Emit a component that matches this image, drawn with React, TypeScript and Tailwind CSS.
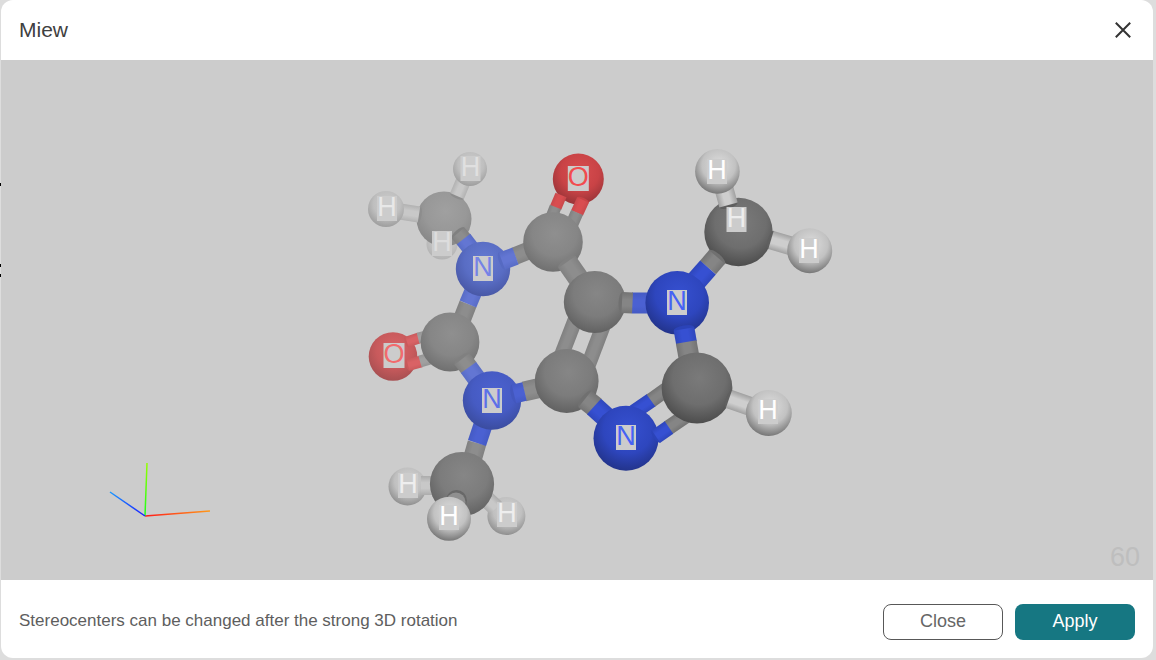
type Point = [number, number];
type Tone = { light: string; base: string; dark: string; seam: string; rod: string; rodEdge: string };

const tones: Record<string, Tone> = {
  carbonNear: { light: "#7a7a7a", base: "#6e6e6e", dark: "#484848", seam: "#656565", rod: "#7d7d7d", rodEdge: "#6a6a6a" },
  carbon: { light: "#868686", base: "#7c7c7c", dark: "#5e5e5e", seam: "#707070", rod: "#858585", rodEdge: "#737373" },
  carbonMid: { light: "#8f8f8f", base: "#868686", dark: "#6d6d6d", seam: "#808080", rod: "#8d8d8d", rodEdge: "#808080" },
  carbonFar: { light: "#a0a0a0", base: "#989898", dark: "#858585", seam: "#929292", rod: "#a0a0a0", rodEdge: "#959595" },
  nitrogenNear: { light: "#3650d0", base: "#2e46be", dark: "#213184", seam: "#2b43b8", rod: "#3650d2", rodEdge: "#2e46bc" },
  nitrogen: { light: "#4c62d0", base: "#465bc3", dark: "#394a9a", seam: "#4357be", rod: "#4b61d2", rodEdge: "#445ac4" },
  nitrogenFar: { light: "#667bd2", base: "#596dc4", dark: "#4655a2", seam: "#566ac2", rod: "#6376d3", rodEdge: "#586cc6" },
  oxygen: { light: "#d84d4f", base: "#c94346", dark: "#923236", seam: "#c84346", rod: "#d94d50", rodEdge: "#c8484b" },
  oxygenFar: { light: "#d96467", base: "#c85a5c", dark: "#a34e50", seam: "#c9595b", rod: "#d96265", rodEdge: "#c95a5c" },
  hydrogenNear: { light: "#dddddd", base: "#c2c2c2", dark: "#6c6c6c", seam: "#5f5f5f", rod: "#cecece", rodEdge: "#a0a0a0" },
  hydrogen: { light: "#d2d2d2", base: "#c0c0c0", dark: "#888888", seam: "#808080", rod: "#c8c8c8", rodEdge: "#acacac" },
  hydrogenFar: { light: "#cdcdcd", base: "#bfbfbf", dark: "#999999", seam: "#8d8d8d", rod: "#c8c8c8", rodEdge: "#b2b2b2" },
  hydrogenFaint: { light: "#c9c9c9", base: "#c3c3c3", dark: "#b0b0b0", seam: "#a8a8a8", rod: "#c8c8c8", rodEdge: "#bbbbbb" },
};

const toneNames = Object.keys(tones);

function Atom({ at, r, tone }: { at: Point; r: number; tone: string }) {
  return <circle cx={at[0]} cy={at[1]} r={r} fill={`url(#${tone})`} />;
}

function Bond({ from, to, w, tone, round }: { from: Point; to: Point; w: number; tone: string; round?: boolean }) {
  const length = Math.hypot(to[0] - from[0], to[1] - from[1]);
  const angle = (Math.atan2(to[1] - from[1], to[0] - from[0]) * 180) / Math.PI;
  return (
    <g transform={`translate(${from[0]} ${from[1]}) rotate(${angle})`}>
      {round && <ellipse cx={0} cy={0} rx={w / 6} ry={w / 2} fill={tones[tone].seam} />}
      <rect x={0} y={-w / 2} width={length} height={w} fill={`url(#${tone}-rod)`} />
    </g>
  );
}

function Label({ x, y, color, plate = "#cccccc", children }: { x: number; y: number; color: string; plate?: string; children: string }) {
  const width = children === "O" ? 21 : 20;
  return (
    <g>
      <rect x={x - width / 2} y={y - 20} width={width} height={25} fill={plate} />
      <text x={x} y={y} textAnchor="middle" fontSize={27} fill={color}>
        {children}
      </text>
    </g>
  );
}

function Molecule() {
  return (
    <svg
      viewBox="1 60 1152 520"
      className="block h-[520px] w-full"
      role="img"
      aria-label="Molecule"
      fontFamily='"Liberation Sans", Arial, sans-serif'
    >
      <defs>
        {toneNames.map((name) => (
          <radialGradient key={name} id={name} cx="0.53" cy="0.36" r="0.68">
            <stop offset="0" stopColor={tones[name].light} />
            <stop offset="0.55" stopColor={tones[name].base} />
            <stop offset="1" stopColor={tones[name].dark} />
          </radialGradient>
        ))}
        {toneNames.map((name) => (
          <linearGradient key={name} id={`${name}-rod`} x1="0" y1="0" x2="0" y2="1">
            <stop offset="0" stopColor={tones[name].rodEdge} />
            <stop offset="0.35" stopColor={tones[name].rod} />
            <stop offset="0.65" stopColor={tones[name].rod} />
            <stop offset="1" stopColor={tones[name].rodEdge} />
          </linearGradient>
        ))}
        <linearGradient id="axis-x" gradientUnits="userSpaceOnUse" x1="145" y1="516" x2="210" y2="511">
          <stop offset="0" stopColor="#ff1a1a" />
          <stop offset="1" stopColor="#ff9a1a" />
        </linearGradient>
        <linearGradient id="axis-y" gradientUnits="userSpaceOnUse" x1="145" y1="516" x2="147" y2="463">
          <stop offset="0" stopColor="#1aff1a" />
          <stop offset="1" stopColor="#96ff00" />
        </linearGradient>
        <linearGradient id="axis-z" gradientUnits="userSpaceOnUse" x1="145" y1="516" x2="110" y2="492">
          <stop offset="0" stopColor="#1a1aff" />
          <stop offset="1" stopColor="#1a9aff" />
        </linearGradient>
      </defs>

      {/* Upper left methyl */}
      <Atom at={[442, 244]} r={15.5} tone="hydrogenFaint" />
      <Atom at={[444, 219]} r={27.5} tone="carbonFar" />
      <Bond from={[419, 214.5]} to={[400, 211.5]} w={16} tone="hydrogenFar" round />
      <Atom at={[386, 209]} r={18} tone="hydrogenFar" />
      <Bond from={[457, 196]} to={[465, 177]} w={15} tone="hydrogenFar" round />
      <Atom at={[470, 169]} r={17} tone="hydrogenFar" />
      <Bond from={[458, 233]} to={[465, 241]} w={17} tone="carbonMid" round />
      <Bond from={[463.5, 239]} to={[475, 254]} w={17} tone="nitrogenFar" />

      {/* Left carbonyl */}
      <Atom at={[393, 356.5]} r={24.3} tone="oxygenFar" />
      <Bond from={[407, 342]} to={[419, 338]} w={11} tone="oxygenFar" round />
      <Bond from={[418, 338]} to={[430, 335]} w={11} tone="carbonFar" />
      <Bond from={[408, 365]} to={[421, 361.5]} w={12} tone="oxygenFar" round />
      <Bond from={[420, 361.5]} to={[432, 358]} w={12} tone="carbonFar" />
      <Bond from={[461, 322]} to={[468, 304]} w={18} tone="carbonMid" />
      <Bond from={[468, 304]} to={[476, 285]} w={18} tone="nitrogenFar" />
      <Bond from={[515, 256]} to={[530, 250]} w={18} tone="carbonMid" />
      <Atom at={[483, 269]} r={27.2} tone="nitrogenFar" />
      <Bond from={[502, 261]} to={[515.5, 256]} w={18} tone="nitrogenFar" round />
      <Atom at={[450, 342]} r={29.4} tone="carbonMid" />
      <Bond from={[462, 359]} to={[469, 368]} w={19} tone="carbonMid" round />
      <Bond from={[468.5, 367.5]} to={[482, 386]} w={19} tone="nitrogenFar" />

      {/* Upper carbonyl */}
      <Atom at={[578.3, 179]} r={25.5} tone="oxygen" />
      <Bond from={[561, 195]} to={[555.5, 208]} w={12} tone="oxygen" />
      <Bond from={[555.5, 207]} to={[550, 221]} w={12} tone="carbonMid" />
      <Bond from={[583, 200]} to={[577, 213]} w={13} tone="oxygen" round />
      <Bond from={[577, 212.5]} to={[569, 231]} w={13} tone="carbonMid" />
      <Atom at={[553, 242]} r={29.8} tone="carbonMid" />
      <Bond from={[567, 262]} to={[590, 295]} w={21} tone="carbonMid" round />

      {/* Five-membered ring */}
      <Bond from={[577, 315]} to={[560, 359]} w={15} tone="carbonMid" />
      <Bond from={[605, 321]} to={[586, 371]} w={15} tone="carbonMid" />
      <Bond from={[632, 303]} to={[655, 303]} w={21} tone="nitrogen" />
      <Bond from={[524, 391.5]} to={[548, 386]} w={20} tone="carbonMid" />
      <Atom at={[594.8, 302]} r={31} tone="carbon" />
      <Bond from={[622, 302.5]} to={[632.5, 303]} w={21} tone="carbon" round />
      <Bond from={[471, 464]} to={[477, 443]} w={19} tone="carbonMid" />
      <Bond from={[477, 443]} to={[484, 422]} w={19} tone="nitrogen" />
      <Atom at={[492, 400.5]} r={29.2} tone="nitrogen" />
      <Bond from={[514, 394]} to={[524.5, 391.5]} w={19} tone="nitrogen" round />
      <Atom at={[566.7, 381]} r={31.9} tone="carbon" />
      <Bond from={[585, 399]} to={[595, 407]} w={21} tone="carbon" round />
      <Bond from={[594, 406.5]} to={[610, 421]} w={21} tone="nitrogenNear" />
      <Bond from={[634, 412]} to={[651.5, 400]} w={15} tone="nitrogenNear" />
      <Bond from={[651, 400.5]} to={[674, 384]} w={15} tone="carbon" />
      <Bond from={[668, 428]} to={[690, 413]} w={15} tone="carbon" />
      <Atom at={[626, 438.3]} r={32.5} tone="nitrogenNear" />
      <Bond from={[656, 436.5]} to={[669, 427.5]} w={15} tone="nitrogenNear" round />

      {/* Upper right methyl */}
      <Atom at={[738.5, 232]} r={34.2} tone="carbonNear" />
      <Bond from={[717, 257]} to={[708, 267.5]} w={21} tone="carbon" round />
      <Bond from={[708, 267.5]} to={[690, 288]} w={21} tone="nitrogenNear" />
      <Bond from={[728.5, 205]} to={[723, 185]} w={19} tone="hydrogenNear" round />
      <Atom at={[717.4, 171.4]} r={22.3} tone="hydrogenNear" />
      <Bond from={[771, 240]} to={[795, 247]} w={19} tone="hydrogenNear" round />
      <Atom at={[809.7, 250.7]} r={22.5} tone="hydrogenNear" />

      {/* Right ring atoms */}
      <Atom at={[677.2, 302.8]} r={31.8} tone="nitrogenNear" />
      <Bond from={[684, 329]} to={[686.5, 343]} w={21} tone="nitrogenNear" round />
      <Bond from={[686.2, 342]} to={[690, 363]} w={21} tone="carbon" />
      <Atom at={[697, 388]} r={35.4} tone="carbonNear" />
      <Bond from={[729, 399]} to={[752, 407]} w={19} tone="hydrogenNear" round />
      <Atom at={[768.8, 413]} r={23} tone="hydrogenNear" />

      {/* Lower methyl */}
      <Atom at={[407.5, 486.5]} r={19} tone="hydrogen" />
      <Bond from={[421, 485.5]} to={[438, 485.5]} w={19} tone="hydrogen" />
      <Atom at={[506.4, 516]} r={19} tone="hydrogen" />
      <Bond from={[480, 493]} to={[496, 508]} w={17} tone="hydrogen" />
      <Atom at={[462, 484]} r={32.1} tone="carbon" />
      <circle cx={456.5} cy={500.5} r={10.5} fill="#686868" />
      <circle cx={456} cy={502} r={9.5} fill="#8f8f8f" />
      <Atom at={[449, 518.8]} r={22} tone="hydrogenNear" />

      <Label x={387} y={216} color="#e8e8e8">H</Label>
      <Label x={470.5} y={176} color="#e0e0e0">H</Label>
      <Label x={442} y={251} color="#dddddd">H</Label>
      <Label x={483} y={276} color="#7583e6">N</Label>
      <Label x={394} y={363} color="#f26b6d">O</Label>
      <Label x={492} y={408} color="#5d70e8">N</Label>
      <Label x={578.3} y={186} color="#f24c4f">O</Label>
      <Label x={677} y={310} color="#4562f5">N</Label>
      <Label x={626} y={445} color="#4562f5">N</Label>
      <Label x={717} y={179} color="#ffffff">H</Label>
      <Label x={736.5} y={227} color="#ededed">H</Label>
      <Label x={809} y={258} color="#ffffff">H</Label>
      <Label x={768} y={419} color="#ffffff">H</Label>
      <Label x={408} y={493} color="#eeeeee">H</Label>
      <Label x={449} y={525} color="#ffffff">H</Label>
      <Label x={507} y={522} color="#eeeeee">H</Label>

      <g strokeWidth={1.5}>
        <path d="M145 516L210 511" stroke="url(#axis-x)" />
        <path d="M145 516L147 463" stroke="url(#axis-y)" />
        <path d="M145 516L110 492" stroke="url(#axis-z)" />
      </g>
      <text x={1140} y={566} textAnchor="end" fontSize={27} fill="#bebebe">
        60
      </text>
    </svg>
  );
}

export default function App() {
  return (
    <div className="relative min-h-screen bg-[#dddddd] pr-[3px] pb-0.5 pl-px font-['Liberation_Sans',Arial,sans-serif]">
      <div className="absolute top-[183px] left-0 h-[3px] w-px bg-black" />
      <div className="absolute top-[264px] left-0 h-[3px] w-px bg-black" />
      <div className="absolute top-[274px] left-0 h-[3px] w-px bg-black" />
      <section role="dialog" aria-labelledby="dialog-title" className="overflow-hidden rounded-xl bg-white">
        <header className="flex h-[60px] items-center justify-between pr-5 pl-[18px]">
          <h1 id="dialog-title" className="text-[21px] leading-6 text-[#404040]">
            Miew
          </h1>
          <button type="button" aria-label="Close dialog" className="flex size-5 items-center justify-center text-[#333333]">
            <svg viewBox="0 0 20 20" className="size-5" fill="none" stroke="currentColor" strokeWidth={2}>
              <path d="M2.8 2.8L17.2 17.2M17.2 2.8L2.8 17.2" />
            </svg>
          </button>
        </header>
        <main className="bg-[#cccccc]">
          <Molecule />
        </main>
        <footer className="flex items-center justify-between gap-3 pt-6 pr-[18px] pb-[18px] pl-[18px]">
          <p className="pb-0.5 text-[17px] leading-6 text-[#5e5e5e]">Stereocenters can be changed after the strong 3D rotation</p>
          <div className="flex gap-3">
            <button type="button" className="h-9 w-[120px] rounded-lg border border-[#585858] bg-white pb-0.5 text-[18px] leading-6 text-[#666666]">
              Close
            </button>
            <button type="button" className="h-9 w-[120px] rounded-lg bg-[#167782] pb-0.5 text-[18px] leading-6 text-white">
              Apply
            </button>
          </div>
        </footer>
      </section>
    </div>
  );
}
